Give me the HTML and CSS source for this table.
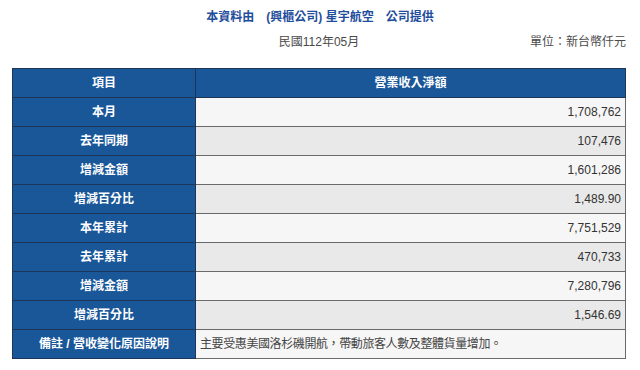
FILE: index.html
```html
<!DOCTYPE html>
<html lang="zh-Hant">
<head>
<meta charset="utf-8">
<link rel="stylesheet" href="styles.css">
</head>
<body>
<div class="page">
  <div class="title">本資料由　(興櫃公司) 星宇航空　公司提供</div>
  <div class="subline">
    <span class="spacer"></span>
    <span class="period">民國112年05月</span>
    <span class="unit">單位：新台幣仟元</span>
  </div>
  <table class="report">
    <tr class="head"><th class="lab">項目</th><th class="val-h">營業收入淨額</th></tr>
    <tr class="odd"><th class="lab">本月</th><td class="num">1,708,762</td></tr>
    <tr class="even"><th class="lab">去年同期</th><td class="num">107,476</td></tr>
    <tr class="odd"><th class="lab">增減金額</th><td class="num">1,601,286</td></tr>
    <tr class="even"><th class="lab">增減百分比</th><td class="num">1,489.90</td></tr>
    <tr class="odd"><th class="lab">本年累計</th><td class="num">7,751,529</td></tr>
    <tr class="even"><th class="lab">去年累計</th><td class="num">470,733</td></tr>
    <tr class="odd"><th class="lab">增減金額</th><td class="num">7,280,796</td></tr>
    <tr class="even"><th class="lab">增減百分比</th><td class="num">1,546.69</td></tr>
    <tr class="odd"><th class="lab">備註 / 營收變化原因說明</th><td class="note">主要受惠美國洛杉磯開航，帶動旅客人數及整體貨量增加。</td></tr>
  </table>
</div>
</body>
</html>
```

FILE: styles.css
```css
html, body {
  margin: 0;
  padding: 0;
  background: #ffffff;
}
body {
  font-family: "Liberation Sans", "Noto Sans CJK TC", sans-serif;
  font-size: 12px;
  color: #333333;
}
.page {
  padding: 0 14px 0 12px;
}
.title {
  text-align: center;
  font-weight: bold;
  color: #1f4e9c;
  font-size: 12px;
  line-height: 16px;
  padding-top: 9px;
  padding-left: 2px;
}
.subline {
  display: flex;
  align-items: center;
  margin-top: 9px;
  line-height: 16px;
  color: #4a4a4a;
}
.spacer, .unit {
  flex: 1;
}
.period {
  text-align: center;
}
.unit {
  text-align: right;
}
.report {
  margin-top: 18px;
  width: 614px;
  border-collapse: collapse;
  border: 1px solid #3a3a3a;
}
.report th, .report td {
  height: 28px;
  padding: 0 4px;
  line-height: 16px;
  font-size: 12px;
}
.lab {
  width: 174px;
  background: #1a5799;
  color: #ffffff;
  font-weight: bold;
  text-align: center;
  border: 1px solid #1d3556;
}
.val-h {
  background: #1a5799;
  color: #ffffff;
  font-weight: bold;
  text-align: center;
  border: 1px solid #1d3556;
}
.report td {
  border: 1px solid #6a6a6a;
}
.odd td {
  background: #f6f6f6;
}
.even td {
  background: #e9e9e9;
}
.num {
  text-align: right;
  color: #333333;
}
.note {
  text-align: left;
  color: #444444;
  letter-spacing: -0.4px;
}
```
